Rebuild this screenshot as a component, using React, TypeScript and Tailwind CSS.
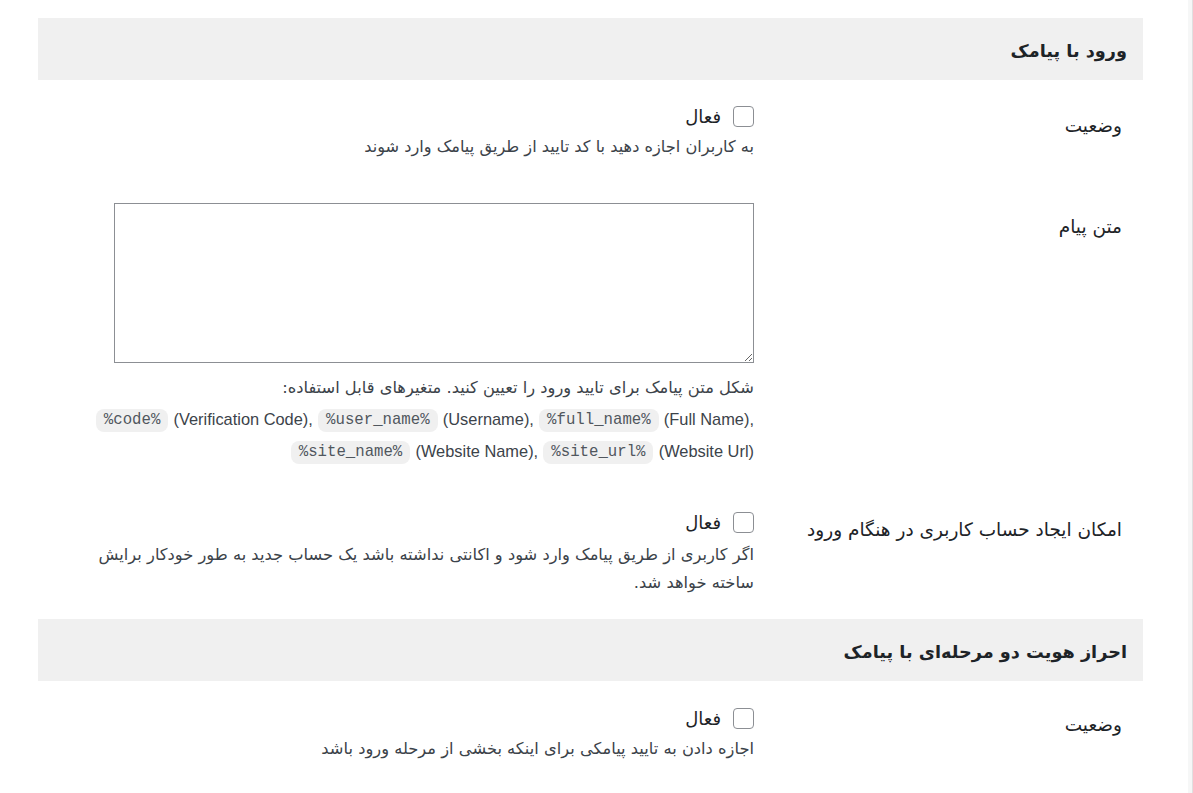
import React from 'react';

const fa = { fontFamily: '"DejaVu Sans", "Noto Sans", sans-serif' };

interface RowProps {
    label: string;
    labelTop: string;
    top?: string;
    children: React.ReactNode;
}

const Row: React.FC<RowProps> = ({ label, labelTop, top = 'pt-[22px]', children }) => (
    <div className={`flex ${top} pb-[22px]`}>
        <div className={`w-[389px] shrink-0 pr-[21px] ${labelTop}`}>
            <span className="block text-[18.5px] leading-7 text-[#1d2327]">{label}</span>
        </div>
        <div className="w-[666px]">{children}</div>
    </div>
);

const Toggle: React.FC = () => (
    <label className="flex items-center gap-3 h-[21px] cursor-pointer">
        <input
            type="checkbox"
            className="appearance-none w-[21px] h-[21px] border border-[#8c8f94] rounded-[4px] bg-white m-0"
        />
        <span className="text-[18px] text-[#1d2327]">فعال</span>
    </label>
);

const Chip: React.FC<{ children: React.ReactNode }> = ({ children }) => (
    <code
        className="inline-block h-[23px] leading-[23px] px-2 rounded-lg bg-[#f0f0f0] text-[#50575e] text-[15.7px] align-middle"
        style={{ fontFamily: '"Liberation Mono", "DejaVu Sans Mono", monospace' }}
    >
        {children}
    </code>
);

const Latin: React.FC<{ children: React.ReactNode }> = ({ children }) => (
    <span className="text-[16.4px] leading-none" style={{ fontFamily: '"Liberation Sans", Arial, sans-serif' }}>{children}</span>
);

const App: React.FC = () => {
    return (
        <div dir="rtl" className="min-h-screen bg-white flex" style={fa}>
            <div className="w-[5px] shrink-0 bg-[#f6f7f7] border-r border-[#e0e0e0]" />
            <div className="w-[1105px] mr-[45px] pt-[18px]">
                <h2 className="h-[62px] bg-[#f0f0f0] flex items-center pr-4 pt-1 text-[17.7px] font-bold text-[#1d2327]">
                    ورود با پیامک
                </h2>

                <Row label="وضعیت" labelTop="pt-[6px]" top="pt-[26px]">
                    <Toggle />
                    <p className="mt-2 text-[16.2px] leading-6 text-[#3c434a]">
                        به کاربران اجازه دهید با کد تایید از طریق پیامک وارد شوند
                    </p>
                </Row>

                <Row label="متن پیام" labelTop="pt-[10px]">
                    <textarea dir="ltr" className="block w-[640px] h-[160px] border border-[#8c8f94] bg-white rounded-none outline-none" />
                    <p className="mt-[9px] text-[16.3px] leading-8 text-[#3c434a]">
                        شکل متن پیامک برای تایید ورود را تعیین کنید. متغیرهای قابل استفاده:
                        <br />
                        <span dir="ltr">
                            <Chip>%code%</Chip> <Latin>(Verification Code),</Latin> <Chip>%user_name%</Chip>{' '}
                            <Latin>(Username),</Latin> <Chip>%full_name%</Chip> <Latin>(Full Name),</Latin>
                        </span>
                        <br />
                        <span dir="ltr">
                            <Chip>%site_name%</Chip> <Latin>(Website Name),</Latin> <Chip>%site_url%</Chip>{' '}
                            <Latin>(Website Url)</Latin>
                        </span>
                    </p>
                </Row>

                <Row label="امکان ایجاد حساب کاربری در هنگام ورود" labelTop="pt-[4px]">
                    <Toggle />
                    <p className="mt-2 text-[16.3px] leading-7 text-[#3c434a]">
                        اگر کاربری از طریق پیامک وارد شود و اکانتی نداشته باشد یک حساب جدید به طور خودکار برایش ساخته خواهد شد.
                    </p>
                </Row>

                <h2 className="h-[62px] bg-[#f0f0f0] flex items-center pr-4 pt-1 text-[17.7px] font-bold text-[#1d2327]">
                    احراز هویت دو مرحله‌ای با پیامک
                </h2>

                <Row label="وضعیت" labelTop="pt-[3px]" top="pt-[27px]">
                    <Toggle />
                    <p className="mt-2 text-[16.3px] leading-6 text-[#3c434a]">
                        اجازه دادن به تایید پیامکی برای اینکه بخشی از مرحله ورود باشد
                    </p>
                </Row>
            </div>
        </div>
    );
};

export default App;
